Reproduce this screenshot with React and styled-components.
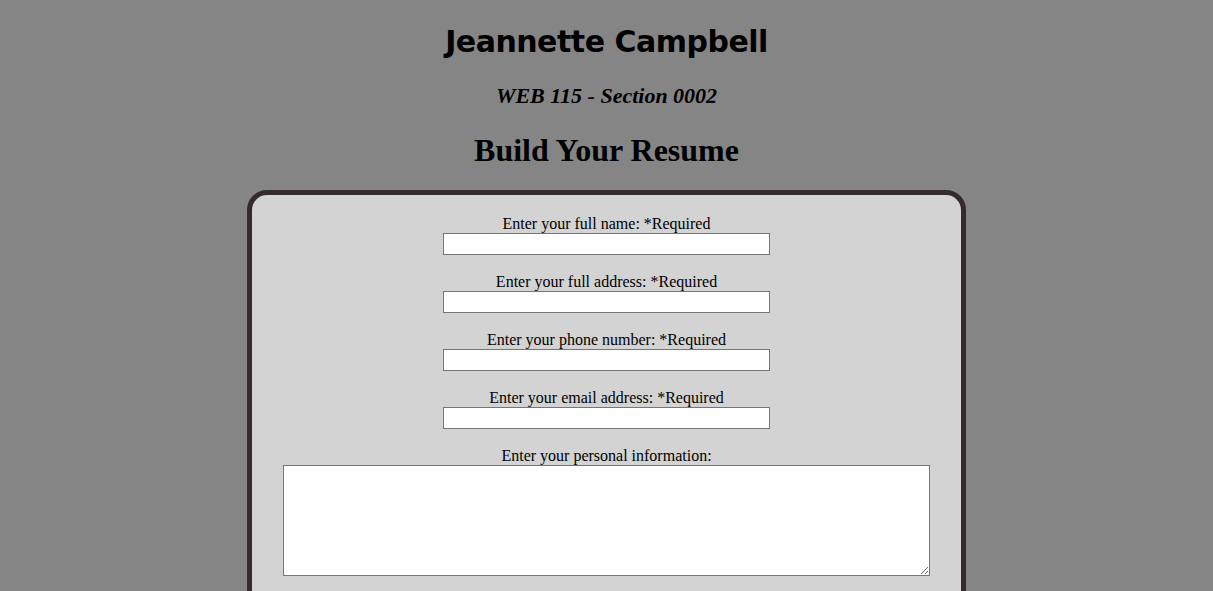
import React from "react";
import styled, { createGlobalStyle } from "styled-components";

const GlobalStyle = createGlobalStyle`
  body {
    margin: 8px;
    background-color: #858585;
    font-family: "Liberation Serif", "Times New Roman", serif;
    color: #000;
  }
`;

const Page = styled.div`
  display: flex;
  flex-direction: column;
  align-items: center;
`;

const Name = styled.h1`
  font-family: "DejaVu Sans", Verdana, sans-serif;
  font-size: 30px;
  font-weight: bold;
  letter-spacing: -0.5px;
  margin: 14px 0 0;
  line-height: 40px;
`;

const Course = styled.h2`
  font-family: "Liberation Serif", serif;
  font-style: italic;
  font-size: 22px;
  font-weight: bold;
  margin: 20px 0 0;
  line-height: 28px;
`;

const Title = styled.h1`
  font-family: "Liberation Serif", serif;
  font-size: 32px;
  font-weight: bold;
  margin: 20px 0 0;
  line-height: 40px;
`;

const Card = styled.form`
  width: 709px;
  margin-top: 20px;
  background-color: #d3d3d3;
  border: 5px solid #352a2c;
  border-radius: 20px;
  padding: 20px 0 40px;
  display: flex;
  flex-direction: column;
  align-items: center;
  gap: 18px;
`;

const Field = styled.label`
  display: flex;
  flex-direction: column;
  align-items: center;
  font-size: 16px;
  line-height: 18px;
`;

const TextInput = styled.input`
  box-sizing: border-box;
  width: 327px;
  height: 22px;
  margin: 0;
  border: 1px solid #767676;
  background: #fff;
`;

const TextArea = styled.textarea`
  box-sizing: border-box;
  width: 647px;
  height: 111px;
  margin: 0;
  border: 1px solid #767676;
  background: #fff;
`;

const fields = [
  "Enter your full name: *Required",
  "Enter your full address: *Required",
  "Enter your phone number: *Required",
  "Enter your email address: *Required",
];

export default function App() {
  return (
    <Page>
      <GlobalStyle />
      <Name>Jeannette Campbell</Name>
      <Course>WEB 115 - Section 0002</Course>
      <Title>Build Your Resume</Title>
      <Card>
        {fields.map((f) => (
          <Field key={f}>
            {f}
            <TextInput type="text" />
          </Field>
        ))}
        <Field>
          Enter your personal information:
          <TextArea />
        </Field>
      </Card>
    </Page>
  );
}
